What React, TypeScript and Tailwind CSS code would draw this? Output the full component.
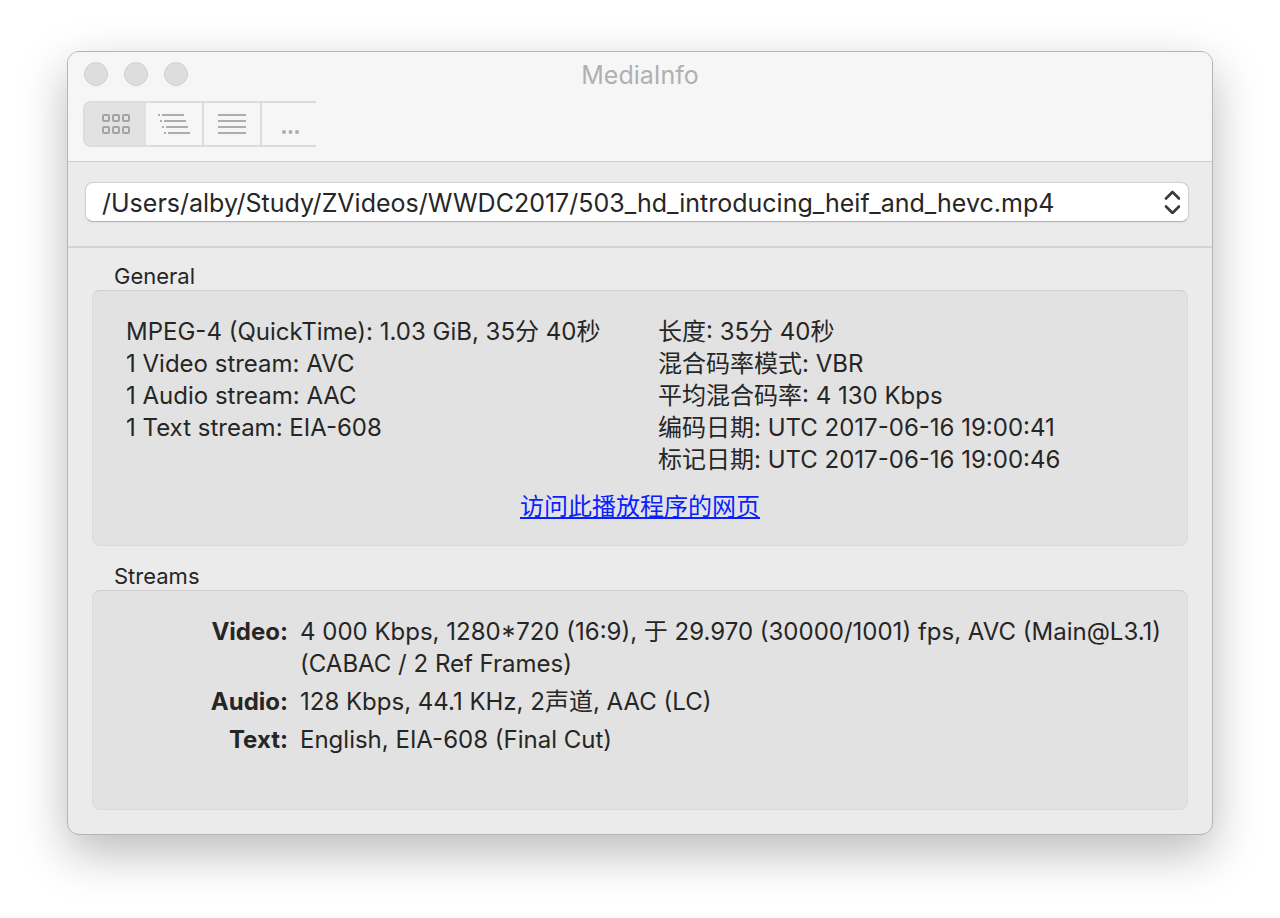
import type { ReactNode } from "react";

const general: string[][] = [
  [
    "MPEG-4 (QuickTime): 1.03 GiB, 35分 40秒",
    "1 Video stream: AVC",
    "1 Audio stream: AAC",
    "1 Text stream: EIA-608",
  ],
  [
    "长度: 35分 40秒",
    "混合码率模式: VBR",
    "平均混合码率: 4 130 Kbps",
    "编码日期: UTC 2017-06-16 19:00:41",
    "标记日期: UTC 2017-06-16 19:00:46",
  ],
];

const streams = [
  {
    kind: "Video:",
    info: "4 000 Kbps, 1280*720 (16:9), 于 29.970 (30000/1001) fps, AVC (Main@L3.1) (CABAC / 2 Ref Frames)",
  },
  { kind: "Audio:", info: "128 Kbps, 44.1 KHz, 2声道, AAC (LC)" },
  { kind: "Text:", info: "English, EIA-608 (Final Cut)" },
];

function GridIcon() {
  return (
    <svg width="28" height="20" viewBox="0 0 28 20" fill="none" stroke="#a3a3a3" strokeWidth="2" aria-hidden="true">
      {[1, 13].map((y) =>
        [1, 11, 21].map((x) => <rect key={`${x}-${y}`} x={x} y={y} width="6" height="6" rx="1" />),
      )}
    </svg>
  );
}

function TreeIcon() {
  return (
    <svg width="32" height="20" viewBox="0 0 32 20" fill="#adadad" aria-hidden="true">
      {[0, 1, 2, 3].map((i) => (
        <g key={i}>
          <rect x={i * 2} y={i * 6} width="2" height="2" />
          <rect x={i * 2 + 4} y={i * 6} width="22" height="2" />
        </g>
      ))}
    </svg>
  );
}

function LinesIcon() {
  return (
    <svg width="28" height="20" viewBox="0 0 28 20" fill="#adadad" aria-hidden="true">
      {[0, 6, 12, 18].map((y) => (
        <rect key={y} y={y} width="28" height="2" />
      ))}
    </svg>
  );
}

function DotsIcon() {
  return (
    <svg width="20" height="20" viewBox="0 0 20 20" fill="#adadad" aria-hidden="true">
      {[5, 11.5, 18].map((x) => (
        <circle key={x} cx={x} cy="18" r="2" />
      ))}
    </svg>
  );
}

function Panel({ title, children, className }: { title: string; children: ReactNode; className: string }) {
  return (
    <section>
      <h2 className="px-[22px] text-[22px] leading-7">{title}</h2>
      <div className={`rounded-lg border border-[#dadada] border-t-[#d0d0d0] bg-[#e2e2e2] ${className}`}>
        {children}
      </div>
    </section>
  );
}

export default function App() {
  return (
    <div className="min-h-screen bg-white px-[67px] pt-[51px] pb-20 font-['Inter','Noto_Sans_CJK_SC',sans-serif] text-[#262626]">
      <main className="overflow-hidden rounded-xl border border-[#b4b4b4] bg-[#ebebeb] shadow-[0_18px_48px_rgba(0,0,0,0.27)]">
        <header className="border-b border-[#cfcfcf] bg-[#f6f6f6] pb-[14px]">
          <div className="grid grid-cols-[1fr_auto_1fr] px-4 pt-1">
            <div className="flex gap-4 pt-[6px]">
              {["Close", "Minimize", "Zoom"].map((name) => (
                <button
                  key={name}
                  type="button"
                  aria-label={name}
                  className="size-6 rounded-full border border-[#cfcfcf] bg-[#dddddd]"
                />
              ))}
            </div>
            <h1 className="text-[25px] leading-[38px] text-[#b0b0b0]">MediaInfo</h1>
          </div>
          <div className="flex px-[15px] pt-[7px]">
            <div className="flex h-[46px] rounded-l-lg border-2 border-r-0 border-[#dcdcdc]">
              <button type="button" aria-label="Easy view" className="flex w-[61px] items-center justify-center rounded-l-md bg-[#e2e2e2]">
                <GridIcon />
              </button>
              <button type="button" aria-label="Tree view" className="flex w-[58px] items-center justify-center border-r-2 border-[#dcdcdc]">
                <TreeIcon />
              </button>
              <button type="button" aria-label="Text view" className="flex w-[58px] items-center justify-center border-r-2 border-[#dcdcdc]">
                <LinesIcon />
              </button>
              <button type="button" aria-label="More" className="flex w-[54px] items-center justify-center">
                <DotsIcon />
              </button>
            </div>
          </div>
        </header>

        <div className="border-b-2 border-[#d3d3d3] pt-5 pr-[23px] pb-6 pl-[17px]">
          <div className="relative h-10 rounded-lg border border-[#d0d0d0] border-b-[#b4b4b4] bg-white shadow-xs">
            <select
              aria-label="File"
              className="block h-full w-full appearance-none rounded-lg bg-transparent pt-[2px] pr-10 pl-4 text-[25px] leading-9"
            >
              <option>/Users/alby/Study/ZVideos/WWDC2017/503_hd_introducing_heif_and_hevc.mp4</option>
            </select>
            <svg
              className="pointer-events-none absolute top-[7px] right-2"
              width="16"
              height="24"
              viewBox="0 0 16 24"
              fill="none"
              stroke="#3a3a3a"
              strokeWidth="2.6"
              strokeLinecap="round"
              strokeLinejoin="round"
              aria-hidden="true"
            >
              <path d="M2 8.500 8.500 2l6.500 6.500M2 16.500l6.500 6.500 6.500-6.500" />
            </svg>
          </div>
        </div>

        <div className="flex flex-col gap-4 px-6 pt-[14px] pb-6">
          <Panel title="General" className="px-[33px] pt-[25px] pb-[22px]">
            <div className="grid grid-cols-2 gap-x-9">
              {general.map((lines) => (
                <ul key={lines[0]} className="text-2xl leading-8 whitespace-nowrap">
                  {lines.map((line) => (
                    <li key={line}>{line}</li>
                  ))}
                </ul>
              ))}
            </div>
            <p className="mt-[15px] text-center text-2xl leading-8">
              <a href="#player" className="text-[#0a1eff] underline decoration-2 underline-offset-2">
                访问此播放程序的网页
              </a>
            </p>
          </Panel>

          <Panel title="Streams" className="px-[21px] pt-[25px] pb-[47px]">
            <table className="w-full border-collapse text-2xl leading-8">
              <tbody>
                {streams.map(({ kind, info }) => (
                  <tr key={kind} className="align-top">
                    <th scope="row" className="w-[186px] pr-3 pb-[6px] text-right font-bold">
                      {kind}
                    </th>
                    <td className="pb-[6px]">{info}</td>
                  </tr>
                ))}
              </tbody>
            </table>
          </Panel>
        </div>
      </main>
    </div>
  );
}
